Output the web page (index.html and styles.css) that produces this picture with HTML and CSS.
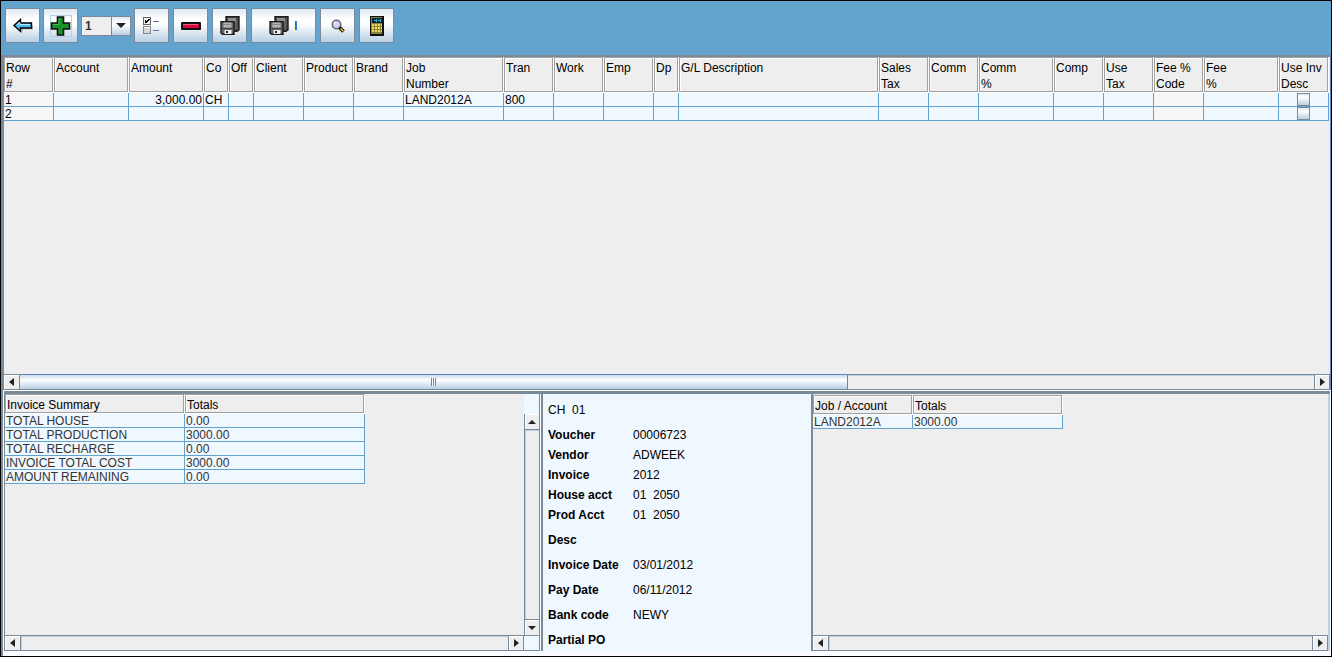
FILE: index.html
```html
<!DOCTYPE html>
<html lang="en">
<head>
    <meta charset="UTF-8">
    <meta name="viewport" content="width=device-width, initial-scale=1.0">
    <title>Invoice Detail</title>
    <link rel="stylesheet" href="styles.css">
</head>
<body>
    <div class="toolbar">
        <div class="tool-group nav-tools">
            <button class="tool" aria-label="Back">
                <svg width="20" height="16" viewBox="0 0 20 16"><path d="M9 3.5L4 8.5L9 13.5V10.5H19V6H9z" fill="#777" opacity=".45" transform="translate(1 1)"/><path d="M1 7.5L7.5 1.5V5H18.5V10H7.5V13.5z" fill="#4db8f5" stroke="#000" stroke-width="1.4"/><path d="M4 7L7 4.5V6.5H17" fill="none" stroke="#c4ebff"/></svg>
            </button>
            <button class="tool" aria-label="Add row">
                <svg width="22" height="22" viewBox="0 0 22 22"><rect x=".5" y=".5" width="21" height="21" fill="none" stroke="#b8cfe5"/><path d="M7.5 2h6v6h6v6h-6v6h-6v-6h-6V8h6z" fill="#16922a" stroke="#111" stroke-width="1.6"/><path d="M9 9V3.5M3 9.5H9" fill="none" stroke="#4fb95c"/></svg>
            </button>
            <div class="combo">
                <select aria-label="Rows to add">
                    <option>1</option>
                </select>
                <span class="combo-arrow"><svg width="10" height="5" viewBox="0 0 10 5"><path d="M0 0H10L5 5z" fill="#222"/></svg></span>
            </div>
        </div>
        <div class="tool-group">
            <button class="tool" aria-label="Options">
                <svg width="17" height="17" viewBox="0 0 17 17" shape-rendering="crispEdges"><rect x=".5" y=".5" width="7" height="7" fill="#eee" stroke="#666"/><path d="M2 3h1v1h1V3h1V2h2v1H6v1H5v1H4v1H2z" fill="#000"/><rect x=".5" y="9.5" width="7" height="7" fill="#d8d8d8" stroke="#888"/><path d="M1 10.5H7" stroke="#fff"/><path d="M10 4.5H16M10 13.5H16" stroke="#6a74b4"/></svg>
            </button>
            <button class="tool" aria-label="Delete row">
                <svg width="20" height="8" viewBox="0 0 20 8"><rect width="20" height="8" rx="1" fill="#111"/><rect x="2" y="2" width="16" height="4" fill="#d8083f"/><path d="M2 2.5H17" stroke="#ee5f83"/></svg>
            </button>
            <button class="tool" aria-label="Save all">
                <svg width="20" height="20" viewBox="0 0 20 20"><path d="M6 .8h13v13l-2 1.500H6z" fill="#4c4c4c" stroke="#1c1c1c" stroke-width="1.4"/><path d="M8 2h8v4H8z" fill="#8e8e8e"/><path d="M16 5v8" stroke="#777"/><path d="M1 5.800h13v12.500H2.500L1 17z" fill="#686868" stroke="#1c1c1c" stroke-width="1.4"/><path d="M3.500 6.500h8v5h-8z" fill="#b4b4b4"/><path d="M4 8.500h7" stroke="#888"/><path d="M2 12.500h11" stroke="#444"/><path d="M4.500 14h7v4h-7z" fill="#eee"/><path d="M6 15h2v2H6z" fill="#222"/></svg>
            </button>
            <button class="tool tool-wide" aria-label="Save invoice">
                <svg width="20" height="20" viewBox="0 0 20 20"><path d="M6 .8h13v13l-2 1.500H6z" fill="#4c4c4c" stroke="#1c1c1c" stroke-width="1.4"/><path d="M8 2h8v4H8z" fill="#8e8e8e"/><path d="M16 5v8" stroke="#777"/><path d="M1 5.800h13v12.500H2.500L1 17z" fill="#686868" stroke="#1c1c1c" stroke-width="1.4"/><path d="M3.500 6.500h8v5h-8z" fill="#b4b4b4"/><path d="M4 8.500h7" stroke="#888"/><path d="M2 12.500h11" stroke="#444"/><path d="M4.500 14h7v4h-7z" fill="#eee"/><path d="M6 15h2v2H6z" fill="#222"/></svg>
                <span>I</span>
            </button>
            <button class="tool" aria-label="Search">
                <svg width="14" height="14" viewBox="0 0 14 14"><circle cx="5.500" cy="5.500" r="4.200" fill="#d4d4ff" stroke="#666" stroke-width="1.500"/><path d="M3 5a3 3 0 0 1 2-2" fill="none" stroke="#fff"/><path d="M8.500 8.500L12.500 12.500" stroke="#111" stroke-width="3.500"/><path d="M9.500 9.500L12.300 12.300" stroke="#e8c81c" stroke-width="1.600"/></svg>
            </button>
            <button class="tool" aria-label="Calculator">
                <svg width="14" height="20" viewBox="0 0 14 20" shape-rendering="crispEdges"><rect width="14" height="20" rx="1" fill="#111"/><rect x="1" y="1" width="11" height="17" fill="#8a8438"/><rect x="2" y="2" width="10" height="5" fill="#123"/><path d="M4 4.500H7M8 4.500H11M6.500 3V6M10.500 3V6" stroke="#28b8e8"/><path d="M2 8h2v2H2zM5 8h2v2H5zM8 8h2v2H8zM2 11h2v2H2zM5 11h2v2H5zM8 11h2v2H8zM2 14h2v2H2zM5 14h2v2H5zM8 14h2v2H8zM11 8h1v2h-1zM11 11h1v2h-1zM11 14h1v2h-1z" fill="#eedc5a"/></svg>
            </button>
        </div>
    </div>

    <div class="workspace">
        <div class="lines-pane">
            <table class="grid">
                <colgroup>
                    <col class="w50"><col class="w75"><col class="w75"><col class="w25"><col class="w25"><col class="w50"><col class="w50"><col class="w50"><col class="w100"><col class="w50"><col class="w50"><col class="w50"><col class="w25"><col class="w200"><col class="w50"><col class="w50"><col class="w75"><col class="w50"><col class="w50"><col class="w50"><col class="w75"><col class="w50">
                </colgroup>
                <thead>
                    <tr>
                        <th><div>Row<br>#</div></th>
                        <th><div>Account</div></th>
                        <th><div>Amount</div></th>
                        <th><div>Co</div></th>
                        <th><div>Off</div></th>
                        <th><div>Client</div></th>
                        <th><div>Product</div></th>
                        <th><div>Brand</div></th>
                        <th><div>Job<br>Number</div></th>
                        <th><div>Tran</div></th>
                        <th><div>Work</div></th>
                        <th><div>Emp</div></th>
                        <th><div>Dp</div></th>
                        <th><div>G/L Description</div></th>
                        <th><div>Sales<br>Tax</div></th>
                        <th><div>Comm</div></th>
                        <th><div>Comm<br>%</div></th>
                        <th><div>Comp</div></th>
                        <th><div>Use<br>Tax</div></th>
                        <th><div>Fee %<br>Code</div></th>
                        <th><div>Fee<br>%</div></th>
                        <th><div>Use Inv<br>Desc</div></th>
                    </tr>
                </thead>
                <tbody>
                    <tr>
                        <td class="locked">1</td><td></td><td class="num">3,000.00</td><td>CH</td><td></td><td></td><td></td><td></td><td>LAND2012A</td><td>800</td><td></td><td></td><td></td><td></td><td></td><td></td><td></td><td></td><td></td><td class="locked"></td><td></td>
                        <td class="check"><input type="checkbox" aria-label="Use invoice description, row 1"></td>
                    </tr>
                    <tr>
                        <td class="locked">2</td><td></td><td class="num"></td><td></td><td></td><td></td><td></td><td></td><td></td><td></td><td></td><td></td><td></td><td></td><td></td><td></td><td></td><td></td><td></td><td class="locked"></td><td></td>
                        <td class="check"><input type="checkbox" aria-label="Use invoice description, row 2"></td>
                    </tr>
                </tbody>
            </table>
        </div>
        <div class="scrollbar">
            <button class="arrow" aria-label="Scroll left"><svg width="5" height="8" viewBox="0 0 5 8"><path d="M5 0V8L0 4z"/></svg></button>
            <div class="track"><div class="thumb"><i class="grip"></i></div></div>
            <button class="arrow" aria-label="Scroll right"><svg width="5" height="8" viewBox="0 0 5 8"><path d="M0 0V8L5 4z"/></svg></button>
        </div>

        <div class="bottom">
            <div class="summary">
                <div class="summary-main">
                    <div class="summary-body">
                        <table class="grid totals">
                            <colgroup><col class="w180"><col class="w180"></colgroup>
                            <thead>
                                <tr><th><div>Invoice Summary</div></th><th><div>Totals</div></th></tr>
                            </thead>
                            <tbody>
                                <tr><td>TOTAL HOUSE</td><td>0.00</td></tr>
                                <tr><td>TOTAL PRODUCTION</td><td>3000.00</td></tr>
                                <tr><td>TOTAL RECHARGE</td><td>0.00</td></tr>
                                <tr><td>INVOICE TOTAL COST</td><td>3000.00</td></tr>
                                <tr><td>AMOUNT REMAINING</td><td>0.00</td></tr>
                            </tbody>
                        </table>
                    </div>
                    <div class="scrollbar">
                        <button class="arrow" aria-label="Scroll left"><svg width="5" height="8" viewBox="0 0 5 8"><path d="M5 0V8L0 4z"/></svg></button>
                        <div class="track"></div>
                        <button class="arrow" aria-label="Scroll right"><svg width="5" height="8" viewBox="0 0 5 8"><path d="M0 0V8L5 4z"/></svg></button>
                    </div>
                </div>
                <div class="scrollbar-side">
                    <div class="corner-top"></div>
                    <button class="arrow arrow-up" aria-label="Scroll up"><svg width="8" height="4" viewBox="0 0 8 4"><path d="M4 0L8 4H0z"/></svg></button>
                    <div class="track-side"></div>
                    <button class="arrow arrow-down" aria-label="Scroll down"><svg width="8" height="4" viewBox="0 0 8 4"><path d="M0 0H8L4 4z"/></svg></button>
                    <div class="corner-bottom"></div>
                </div>
            </div>

            <div class="voucher">
                <p>CH&nbsp; 01</p>
                <dl>
                    <div><dt>Voucher</dt><dd>00006723</dd></div>
                    <div><dt>Vendor</dt><dd>ADWEEK</dd></div>
                    <div><dt>Invoice</dt><dd>2012</dd></div>
                    <div><dt>House acct</dt><dd>01&nbsp; 2050</dd></div>
                    <div><dt>Prod Acct</dt><dd>01&nbsp; 2050</dd></div>
                    <div class="spaced"><dt>Desc</dt><dd></dd></div>
                    <div class="spaced"><dt>Invoice Date</dt><dd>03/01/2012</dd></div>
                    <div class="spaced"><dt>Pay Date</dt><dd>06/11/2012</dd></div>
                    <div class="spaced"><dt>Bank code</dt><dd>NEWY</dd></div>
                    <div class="spaced"><dt>Partial PO</dt><dd></dd></div>
                </dl>
            </div>

            <div class="jobs">
                <div class="jobs-body">
                    <table class="grid totals">
                        <colgroup><col class="w100"><col class="w150"></colgroup>
                        <thead>
                            <tr><th><div>Job / Account</div></th><th><div>Totals</div></th></tr>
                        </thead>
                        <tbody>
                            <tr><td>LAND2012A</td><td>3000.00</td></tr>
                        </tbody>
                    </table>
                </div>
                <div class="scrollbar">
                    <button class="arrow" aria-label="Scroll left"><svg width="5" height="8" viewBox="0 0 5 8"><path d="M5 0V8L0 4z"/></svg></button>
                    <div class="track"></div>
                    <button class="arrow" aria-label="Scroll right"><svg width="5" height="8" viewBox="0 0 5 8"><path d="M0 0V8L5 4z"/></svg></button>
                </div>
            </div>
        </div>
    </div>
</body>
</html>
```
FILE: styles.css
```css
* {
    box-sizing: border-box;
}
body {
    display: flex;
    flex-direction: column;
    margin: 0;
    min-height: 100vh;
    border: 1px solid #000;
    font-family: "Liberation Sans", Arial, sans-serif;
    font-size: 12px;
    color: #000;
    background-color: #fff;
}
button {
    font: inherit;
    color: inherit;
    border-radius: 0;
    padding: 0;
}

/* Toolbar */
.toolbar {
    display: flex;
    gap: 3px;
    padding: 7px 4px 12px;
    background-color: #63a3ce;
}
.tool-group {
    display: flex;
    align-items: center;
    gap: 4px;
}
.nav-tools {
    gap: 3px;
}
.tool {
    display: flex;
    align-items: center;
    justify-content: center;
    gap: 5px;
    width: 35px;
    height: 35px;
    border: 1px solid #7a8a99;
    background: linear-gradient(#dde8f3, #fff 30%, #fff 45%, #b8cfe5);
}
.tool-wide {
    width: 65px;
}
.combo {
    position: relative;
    width: 50px;
    height: 20px;
}
.combo select {
    appearance: none;
    display: block;
    width: 100%;
    height: 100%;
    margin: 0;
    padding: 0 0 0 3px;
    border: 1px solid #7a8a99;
    border-radius: 0;
    background-color: #eee;
    color: #333;
    font: bold 12px "Liberation Sans", Arial, sans-serif;
}
.combo-arrow {
    position: absolute;
    top: 0;
    right: 0;
    bottom: 0;
    display: flex;
    align-items: center;
    justify-content: center;
    width: 20px;
    border: 1px solid #7a8a99;
    background: linear-gradient(#dde8f3, #fff 30%, #fff 45%, #b8cfe5);
    pointer-events: none;
}

/* Panes */
.workspace {
    flex: 1;
    display: flex;
    flex-direction: column;
    border-top: 2px solid #7a8a99;
    border-left: 3px solid #7a8a99;
    border-right: 1px solid #6382bf;
    background-color: #eee;
}
.lines-pane {
    flex: 1;
    overflow: hidden;
}

/* Tables */
.grid {
    table-layout: fixed;
    width: 1px;
    border-spacing: 0;
}
.w25 { width: 25px; }
.w50 { width: 50px; }
.w75 { width: 75px; }
.w100 { width: 100px; }
.w150 { width: 150px; }
.w180 { width: 180px; }
.w200 { width: 200px; }
.grid th {
    padding: 0 1px 1px 0;
    text-align: left;
    vertical-align: top;
    font-weight: normal;
    white-space: nowrap;
}
.grid th div {
    height: 35px;
    padding: 2px 0 0 1px;
    border: 1px solid #a0a0a0;
    box-shadow: 1px 1px 0 #fff, inset 1px 1px 0 #fff;
    line-height: 16px;
}
.grid td {
    height: 14px;
    padding: 1px 1px 0;
    border-right: 1px solid #63a3ce;
    border-bottom: 1px solid #63a3ce;
    background-color: #eff7ff;
    line-height: 12px;
    white-space: nowrap;
}
.grid .locked {
    background-color: #f6f6f6;
}
.grid .num {
    text-align: right;
}
.grid .check {
    padding-top: 0;
}
.check input {
    appearance: none;
    display: block;
    width: 13px;
    height: 13px;
    margin: 0 auto;
    border: 1px solid #7a8a99;
    background: linear-gradient(#dde8f3, #fff 30%, #b8cfe5);
}
.grid.totals th div {
    height: 19px;
}
.totals td {
    color: #333;
}

/* Scrollbars */
.scrollbar {
    display: flex;
    height: 16px;
    border-top: 1px solid #7a8a99;
    border-bottom: 1px solid #7a8a99;
    background-color: #eee;
}
.arrow {
    display: flex;
    flex: none;
    align-items: center;
    justify-content: center;
    width: 16px;
    border: 0 solid #7a8a99;
    border-right-width: 1px;
    background-color: #eee;
    box-shadow: inset 1px 1px 0 #fff;
    fill: #222;
}
.track + .arrow {
    border-left-width: 1px;
}
.track {
    flex: 1;
    box-shadow: inset 1px 1px 0 #b8cfe5;
}
.thumb {
    display: flex;
    align-items: center;
    justify-content: center;
    width: 64%;
    height: 14px;
    border-right: 1px solid #6382bf;
    box-shadow: 0 -1px 0 #6382bf;
    background: linear-gradient(#c8daec, #fff 35%, #e8f0f8 55%, #b8cfe5);
}
.grip {
    width: 5px;
    height: 8px;
    background: repeating-linear-gradient(90deg, #6382bf 0 1px, #fff 1px 2px);
}

/* Bottom row */
.bottom {
    display: grid;
    grid-template-columns: 537fr 272fr 517fr;
    margin-top: 1px;
    border-top: 3px solid #7a8a99;
    border-bottom: 5px solid #f8fbff;
    outline: 1px solid #fff;
}
.summary {
    display: flex;
    border-left: 1px solid #7a8a99;
    border-right: 1px solid #fff;
}
.summary-main,
.jobs {
    flex: 1;
    display: flex;
    flex-direction: column;
    min-width: 0;
}
.summary-body,
.jobs-body {
    flex: 1;
    overflow: hidden;
}
.scrollbar-side {
    display: flex;
    flex-direction: column;
    width: 16px;
    border-right: 1px solid #7a8a99;
}
.corner-top {
    height: 20px;
    background-color: #eff7ff;
}
.corner-bottom {
    height: 16px;
    border-top: 1px solid #7a8a99;
    border-bottom: 1px solid #7a8a99;
    background-color: #eff7ff;
}
.arrow-up,
.arrow-down {
    width: 100%;
    height: 16px;
    border-width: 0 0 1px 1px;
}
.track-side + .arrow-down {
    border-width: 1px 0 0 1px;
}
.track-side {
    flex: 1;
    border-left: 1px solid #7a8a99;
    box-shadow: inset 1px 1px 0 #b8cfe5;
}

/* Voucher details */
.voucher {
    padding: 6px 5px 1px;
    border: solid #7a8a99;
    border-width: 0 2px;
    background-color: #eff7ff;
    line-height: 20px;
}
.voucher p {
    margin: 0 0 5px;
}
.voucher dl {
    margin: 0;
}
.voucher dl div {
    display: flex;
    height: 20px;
}
.voucher dl .spaced {
    margin-top: 5px;
}
.voucher dt {
    width: 85px;
    font-weight: bold;
}
.voucher dd {
    margin: 0;
}

/* Job totals */
.jobs {
    border-right: 2px solid #b8cfe5;
}
.jobs-body {
    padding-top: 1px;
}
```
